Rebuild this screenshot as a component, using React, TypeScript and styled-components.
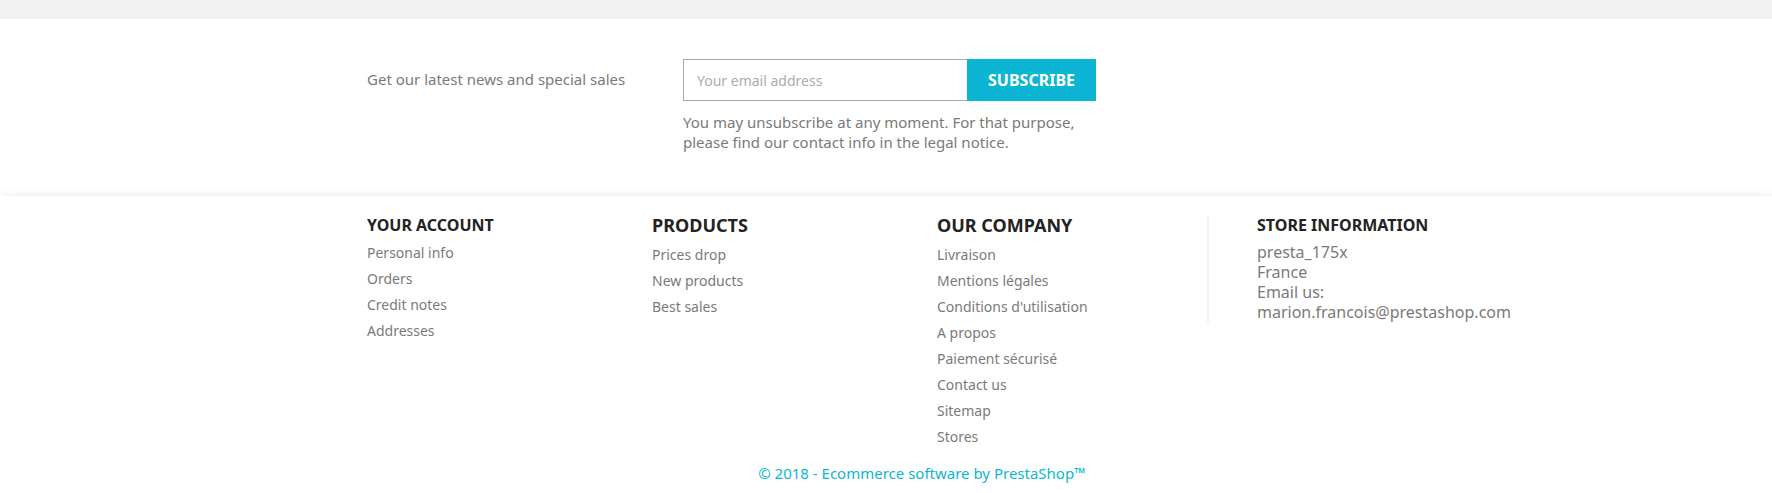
import React from "react";
import styled, { createGlobalStyle } from "styled-components";

const GlobalStyle = createGlobalStyle`
  html, body {
    margin: 0;
    padding: 0;
    background: #ffffff;
  }
  body {
    font-family: "Noto Sans", "Open Sans", sans-serif;
    color: #7a7a7a;
    -webkit-font-smoothing: antialiased;
  }
  * { box-sizing: border-box; }
`;

const TopBand = styled.div`
  height: 19px;
  background: #f1f1f1;
`;

const Container = styled.div`
  width: 1140px;
  margin-left: 352px;
  padding: 0 15px;
`;

const NewsletterRow = styled.div`
  display: flex;
  align-items: flex-start;
  padding: 40px 0 44px;
`;

const NewsletterLabel = styled.p`
  width: 316px;
  margin: 0;
  padding-top: 10px;
  font-size: 15px;
  line-height: 20px;
  color: #7a7a7a;
`;

const NewsletterForm = styled.form`
  display: flex;
  flex-direction: column;
  width: 413px;
`;

const InputGroup = styled.div`
  display: flex;
  height: 42px;
`;

const EmailInput = styled.input`
  flex: 1;
  min-width: 0;
  height: 42px;
  border: 1px solid #aaaaaa;
  border-right: none;
  padding: 0 13px;
  font-family: inherit;
  font-size: 14px;
  color: #232323;
  outline: none;
  &::placeholder {
    color: #acacac;
  }
`;

const SubscribeButton = styled.button`
  width: 129px;
  height: 42px;
  border: none;
  background: #0db5d4;
  color: #ffffff;
  font-family: inherit;
  font-weight: 700;
  font-size: 16px;
  text-transform: uppercase;
  cursor: pointer;
`;

const Notice = styled.p`
  margin: 11px 0 0;
  font-size: 15px;
  line-height: 20px;
  color: #7a7a7a;
`;

const FooterContainer = styled.footer`
  padding-top: 19px;
  box-shadow: 2px 2px 11px 0 rgba(0, 0, 0, 0.13);
  background: #ffffff;
`;

const FooterRow = styled.div`
  display: flex;
  align-items: flex-start;
  margin: 0 -15px;
`;

const Column = styled.div`
  width: 285px;
  padding: 0 15px;
`;

const ContactColumn = styled.div`
  width: 285px;
  border-left: 2px solid #f1f1f1;
  padding-left: 48px;
`;

const Heading = styled.p<{ $big?: boolean }>`
  margin: 0 0 ${(p) => (p.$big ? 9 : 7)}px;
  font-size: ${(p) => (p.$big ? 18 : 16)}px;
  line-height: 20px;
  font-weight: 700;
  color: #232323;
  text-transform: uppercase;
`;

const LinkList = styled.ul`
  list-style: none;
  margin: 0;
  padding: 0;
`;

const LinkItem = styled.li`
  margin-bottom: 5px;
  line-height: 21px;
`;

const FooterLink = styled.a`
  font-size: 14px;
  color: #7a7a7a;
  text-decoration: none;
`;

const ContactText = styled.div`
  font-size: 16px;
  line-height: 20px;
  color: #7a7a7a;
`;

const Copyright = styled.p`
  margin: 11px 0 0;
  text-align: center;
  font-size: 15px;
  line-height: 20px;
`;

const CopyrightLink = styled.a`
  color: #0db5d4;
  text-decoration: none;
`;

const columns: { title: string; big?: boolean; links: string[] }[] = [
  {
    title: "Your account",
    links: ["Personal info", "Orders", "Credit notes", "Addresses"],
  },
  {
    title: "Products",
    big: true,
    links: ["Prices drop", "New products", "Best sales"],
  },
  {
    title: "Our company",
    big: true,
    links: [
      "Livraison",
      "Mentions légales",
      "Conditions d'utilisation",
      "A propos",
      "Paiement sécurisé",
      "Contact us",
      "Sitemap",
      "Stores",
    ],
  },
];

export default function App() {
  return (
    <>
      <GlobalStyle />
      <TopBand />
      <Container>
        <NewsletterRow>
          <NewsletterLabel>Get our latest news and special sales</NewsletterLabel>
          <NewsletterForm onSubmit={(e) => e.preventDefault()}>
            <InputGroup>
              <EmailInput type="email" placeholder="Your email address" />
              <SubscribeButton type="submit">Subscribe</SubscribeButton>
            </InputGroup>
            <Notice>
              You may unsubscribe at any moment. For that purpose,
              <br />
              please find our contact info in the legal notice.
            </Notice>
          </NewsletterForm>
        </NewsletterRow>
      </Container>
      <FooterContainer>
        <Container>
          <FooterRow>
            {columns.map((col) => (
              <Column key={col.title}>
                <Heading $big={col.big}>{col.title}</Heading>
                <LinkList>
                  {col.links.map((l) => (
                    <LinkItem key={l}>
                      <FooterLink href="#">{l}</FooterLink>
                    </LinkItem>
                  ))}
                </LinkList>
              </Column>
            ))}
            <ContactColumn>
              <Heading>Store information</Heading>
              <ContactText>
                presta_175x
                <br />
                France
                <br />
                Email us:
                <br />
                marion.francois@prestashop.com
              </ContactText>
            </ContactColumn>
          </FooterRow>
          <Copyright>
            <CopyrightLink href="#">© 2018 - Ecommerce software by PrestaShop™</CopyrightLink>
          </Copyright>
        </Container>
      </FooterContainer>
    </>
  );
}
